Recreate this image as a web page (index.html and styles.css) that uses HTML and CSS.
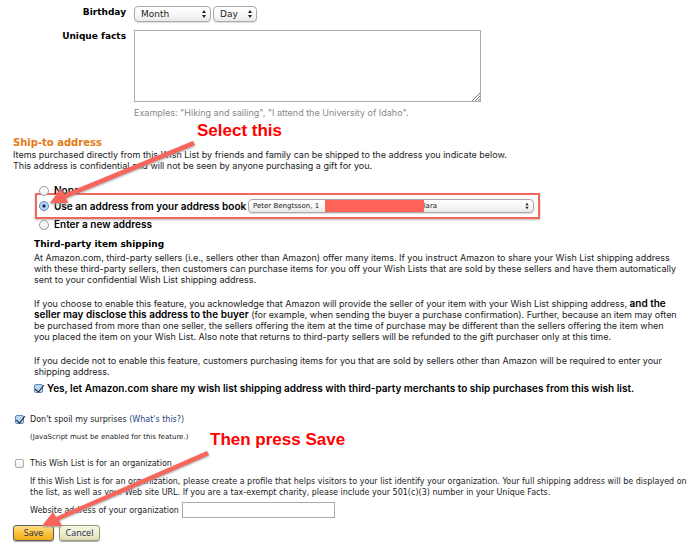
FILE: index.html
```html
<!DOCTYPE html>
<html lang="en">
<head>
<meta charset="utf-8">
<title>Wish List settings</title>
<link rel="stylesheet" href="styles.css">
</head>
<body>
<form class="page">
  <div class="field">
    <label class="field-label" for="month">Birthday</label>
    <div class="field-body selects">
      <span class="select month"><select id="month"><option>Month</option></select><svg class="updown" viewBox="0 0 6 10"><path d="M3 1 5 4H1zM3 9 1 6h4z"/></svg></span>
      <span class="select day"><select aria-label="Day"><option>Day</option></select><svg class="updown" viewBox="0 0 6 10"><path d="M3 1 5 4H1zM3 9 1 6h4z"/></svg></span>
    </div>
  </div>
  <div class="field facts">
    <label class="field-label" for="facts">Unique facts</label>
    <div class="field-body">
      <div class="area"><textarea id="facts"></textarea><svg class="grip" viewBox="0 0 8 8"><path d="M0 8 8 0M3 8 8 3M6 8 8 6"/></svg></div>
      <p class="hint">Examples: "Hiking and sailing", "I attend the University of Idaho".</p>
    </div>
  </div>

  <section class="ship">
    <h2>Ship-to address</h2>
    <p>Items purchased directly from this Wish List by friends and family can be shipped to the address you indicate below.<br>This address is confidential and will not be seen by anyone purchasing a gift for you.</p>
  </section>

  <div class="choices">
    <div class="choice"><input type="radio" name="addr" id="none"><label for="none">None</label></div>
    <div class="choice picked">
      <input type="radio" name="addr" id="book" checked><label for="book">Use an address from your address book</label>
      <span class="select address"><select aria-label="Address"><option>Peter Bengtsson, 1&nbsp;&nbsp;&nbsp;&nbsp;&nbsp;&nbsp;&nbsp;&nbsp;&nbsp;&nbsp;&nbsp;&nbsp;&nbsp;&nbsp;&nbsp;&nbsp;&nbsp;&nbsp;&nbsp;&nbsp;&nbsp;&nbsp;&nbsp;&nbsp;&nbsp;&nbsp;&nbsp;&nbsp;&nbsp;&nbsp;&nbsp;&nbsp;&nbsp;&nbsp;&nbsp;&nbsp;&nbsp;&nbsp;&nbsp;&nbsp;&nbsp;&nbsp;&nbsp;&nbsp;&nbsp;&nbsp;&nbsp;lara</option></select><span class="redaction"></span><svg class="updown" viewBox="0 0 6 10"><path d="M3 1 5 4H1zM3 9 1 6h4z"/></svg></span>
    </div>
    <div class="choice"><input type="radio" name="addr" id="new"><label for="new">Enter a new address</label></div>
  </div>

  <section class="third">
    <h3>Third-party item shipping</h3>
    <p>At Amazon.com, third-party sellers (i.e., sellers other than Amazon) offer many items. If you instruct Amazon to share your Wish List shipping address<br>with these third-party sellers, then customers can purchase items for you off your Wish Lists that are sold by these sellers and have them automatically<br>sent to your confidential Wish List shipping address.</p>
    <p>If you choose to enable this feature, you acknowledge that Amazon will provide the seller of your item with your Wish List shipping address, <b>and the<br>seller may disclose this address to the buyer</b> (for example, when sending the buyer a purchase confirmation). Further, because an item may often<br>be purchased from more than one seller, the sellers offering the item at the time of purchase may be different than the sellers offering the item when<br>you placed the item on your Wish List. Also note that returns to third-party sellers will be refunded to the gift purchaser only at this time.</p>
    <p>If you decide not to enable this feature, customers purchasing items for you that are sold by sellers other than Amazon will be required to enter your<br>shipping address.</p>
    <div class="agree"><input type="checkbox" id="share" checked><label for="share">Yes, let Amazon.com share my wish list shipping address with third-party merchants to ship purchases from this wish list.</label></div>
  </section>

  <section class="extras">
    <div class="tick"><input type="checkbox" id="spoil" checked><span><label for="spoil">Don't spoil my surprises</label> <a href="#">(What's this?)</a></span></div>
    <p class="note">(JavaScript must be enabled for this feature.)</p>
    <div class="tick"><input type="checkbox" id="org"><label for="org">This Wish List is for an organization</label></div>
    <p class="org">If this Wish List is for an organization, please create a profile that helps visitors to your list identify your organization. Your full shipping address will be displayed on<br>the list, as well as your Web site URL. If you are a tax-exempt charity, please include your 501(c)(3) number in your Unique Facts.</p>
    <div class="site"><label for="site">Website address of your organization</label><input type="text" id="site"></div>
  </section>

  <div class="actions">
    <button type="button" class="btn save">Save</button>
    <button type="button" class="btn cancel">Cancel</button>
  </div>

  <span class="callout first">Select this</span>
  <svg class="arrow arrow-first" viewBox="0 0 155 70"><path d="M147 1 149 5 20 58 22 63 4 63 15 48 18 54z"/></svg>
  <span class="callout second">Then press Save</span>
  <svg class="arrow arrow-second" viewBox="0 0 175 82"><path d="M168 1 170 5 20 70 23 76 3 76 14 62 17 67z"/></svg>
</form>
</body>
</html>
```
FILE: styles.css
```css
* { box-sizing: border-box; }
body { margin: 0; background: #fff; color: #222; font: 9px/11px Inter, "DejaVu Sans", sans-serif; white-space: nowrap; }
p, h2, h3 { margin: 0; }
.page { position: relative; padding: 6px 12px 9px 13px; }
select, input, textarea, button { font-family: inherit; margin: 0; }

.field { display: flex; gap: 8px; }
.field-label, h2, h3, .select select, .extras { font-family: "DejaVu Sans", sans-serif; }
.field-label { width: 113px; padding-top: 1px; text-align: right; font-weight: bold; color: #000; }
.facts { margin-top: 8px; }
.selects { display: flex; gap: 2px; }
.select { position: relative; display: block; }
.select select { appearance: none; display: block; width: 100%; height: 16px; padding: 0 6px; border: 1px solid #aaa; border-radius: 4px; background: linear-gradient(#fff, #f8f8f8 50%, #e9e9e9); color: #222; font-size: 9px; box-shadow: 0 1px 1px #ddd; }
.month { width: 77px; }
.day { width: 44px; }
.updown { position: absolute; right: 4px; top: 3px; width: 6px; height: 10px; fill: #222; }
.area { position: relative; width: 347px; }
.area textarea { display: block; width: 100%; height: 72px; border: 1px solid #aaa; resize: none; }
.grip { position: absolute; right: 1px; bottom: 1px; width: 8px; height: 8px; stroke: #777; fill: none; }
.hint { margin-top: 5px; color: #888; }

.ship { margin-top: 19px; }
h2 { font-size: 10px; line-height: 12px; color: #e47911; }
.choices { margin: 12px 0 0 22px; }
.choice, .agree, b { color: #000; font-size: 10px; font-weight: 600; }
.choice { display: flex; align-items: center; gap: 5px; height: 15px; padding-left: 4px; }
.picked { width: 505px; height: 26px; margin: -5px 0 -2px; padding-left: 2px; border: 2px solid #f0675e; box-shadow: 0 1px 2px #bbb; }
input[type="radio"] { appearance: none; flex: none; width: 10px; height: 10px; border: 1px solid #999; border-radius: 50%; background: linear-gradient(#fff, #eee); }
input[type="radio"]:checked { border-color: #6487b5; background: radial-gradient(circle, #123 0 1px, #a9d0f5 2px, #c8e5fc); }
.picked label { width: 189px; }
.picked .address { flex: none; width: 286px; }
.address select { height: 14px; padding: 0 4px; font-size: 7px; }
.address .updown { top: 3px; height: 8px; }
.redaction { position: absolute; left: 77px; top: 1px; width: 99px; height: 12px; background: #ff6257; }

.third { margin: 6px 0 0 21px; }
h3 { margin-bottom: 2px; font-size: 9px; line-height: 12px; color: #000; }
.third p { margin-bottom: 13px; }
b { line-height: 1; }
.agree { display: flex; align-items: center; gap: 4px; margin-top: -7px; }
input[type="checkbox"] { appearance: none; flex: none; width: 9px; height: 9px; border: 1px solid #aaa; border-radius: 2px; background: linear-gradient(#fff, #eee); }
input[type="checkbox"]:checked { position: relative; border-color: #6487b5; background: #b4d8f6; }
input[type="checkbox"]:checked::after { content: ""; position: absolute; left: 2px; top: -2px; width: 4px; height: 8px; border: solid #111; border-width: 0 1px 1px 0; transform: rotate(38deg); }

.extras { margin: 20px 0 0 2px; font-size: 8px; }
.tick { display: flex; align-items: center; gap: 6px; }
.extras a { color: #26437f; text-decoration: none; }
.note { margin: 7px 0 15px 15px; font-size: 7px; }
.org { margin: 7px 0 0 15px; }
.site { display: flex; align-items: center; gap: 3px; margin: 4px 0 0 15px; }
.site input { width: 153px; height: 16px; border: 1px solid #aaa; }

.actions { display: flex; gap: 5px; margin-top: 7px; }
.btn { width: 41px; height: 16px; padding: 0; border: 1px solid #6c6440; border-radius: 3px; color: #1c2c5c; font: 9px/12px "Open Sans", sans-serif; box-shadow: 0 1px 1px #aaa; }
.save { background: linear-gradient(#ffe08a, #fbc43c 50%, #f3ab1d); border-color: #5b5a6c; }
.cancel { background: linear-gradient(#f8f8e4, #eeeecf 50%, #dcdcb4); border-color: #99997a; }

.callout { position: absolute; color: #f00; font: bold 17px/20px "Liberation Sans", sans-serif; }
.first { left: 197px; top: 121px; }
.second { left: 210px; top: 430px; }
.arrow { position: absolute; fill: #f9655a; filter: drop-shadow(0 1px 1px #999); overflow: visible; }
.arrow-first { left: 46px; top: 140px; width: 155px; height: 70px; }
.arrow-second { left: 39px; top: 450px; width: 175px; height: 82px; }
```
